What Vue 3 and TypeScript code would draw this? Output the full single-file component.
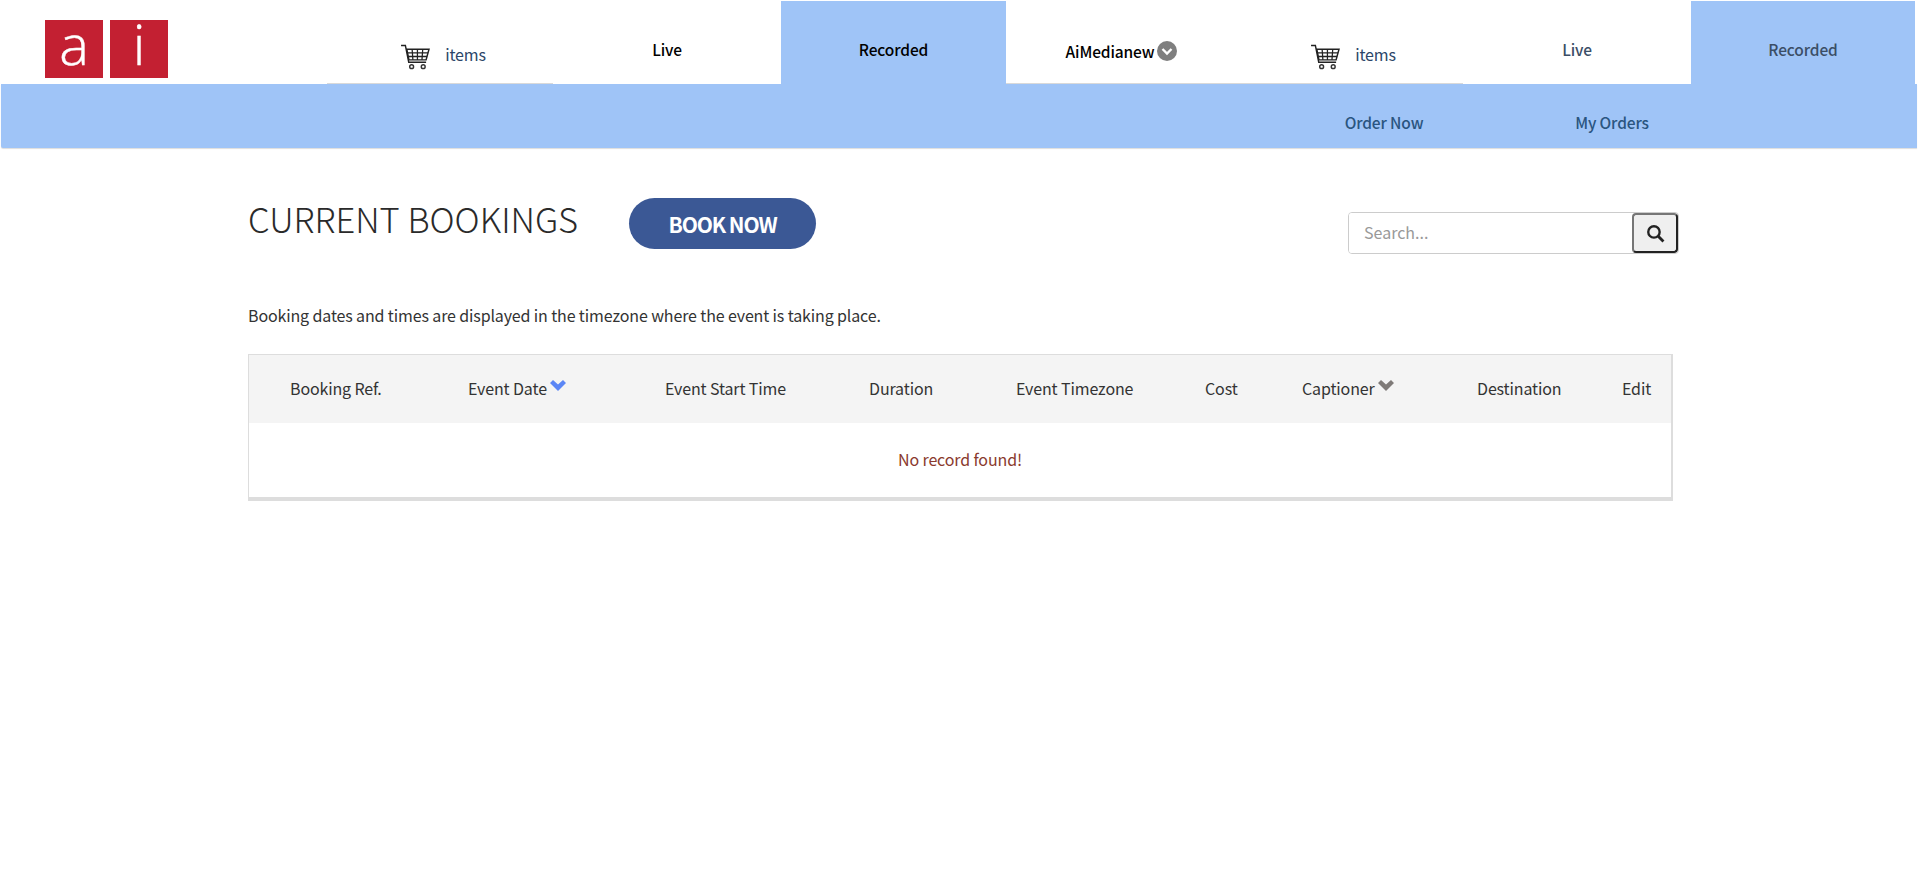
<template>
  <div class="page">
    <header class="top">
      <div class="logo">
        <span class="logo-box">a</span>
        <span class="logo-box">i</span>
      </div>
      <nav class="tabs">
        <a
          v-for="tab in tabs"
          :key="tab.id"
          class="tab"
          :class="[tab.kind, { active: tab.active, faded: tab.faded }]"
          :style="{ width: tab.width + 'px' }"
        >
          <svg v-if="tab.kind == 'cart'" class="cart-icon" viewBox="0 0 32 28" aria-hidden="true">
            <path d="M1 2.500h4.500l3.500 17.500h18" fill="none" stroke="#222" stroke-width="1.500" />
            <path d="M7 6.500h23l-3 11H9.200z" fill="none" stroke="#222" stroke-width="1.500" />
            <path
              d="M7.500 10.200h21.500M8.300 14h19.700M12.500 6.500l.8 11M18 6.500v11M23.500 6.500l-.8 11"
              fill="none"
              stroke="#222"
              stroke-width="1.300"
            />
            <circle cx="12" cy="24.500" r="2" fill="none" stroke="#333" stroke-width="1.500" />
            <circle cx="24" cy="24.500" r="2" fill="none" stroke="#333" stroke-width="1.500" />
          </svg>
          <span>{{ tab.label }}</span>
          <span v-if="tab.kind == 'user'" class="user-arrow">
            <svg viewBox="0 0 20 20" aria-hidden="true">
              <path d="M5.500 8l4.500 4.500L14.500 8" fill="none" stroke="#fff" stroke-width="2.400" />
            </svg>
          </span>
        </a>
      </nav>
    </header>

    <div class="subbar">
      <a class="sublink">Order Now</a>
      <a class="sublink">My Orders</a>
    </div>

    <main class="content">
      <div class="title-row">
        <h1>CURRENT BOOKINGS</h1>
        <button class="book" type="button">BOOK NOW</button>
        <div class="search">
          <input type="text" placeholder="Search..." />
          <button type="button" aria-label="Search">
            <svg viewBox="0 0 16 16" aria-hidden="true">
              <circle cx="6.700" cy="6.700" r="4.800" fill="none" stroke="#222" stroke-width="2" />
              <path d="M10.300 10.300l4.400 4.400" stroke="#222" stroke-width="2.400" />
            </svg>
          </button>
        </div>
      </div>

      <p class="note">Booking dates and times are displayed in the timezone where the event is taking place.</p>

      <section class="table">
        <div class="head">
          <div v-for="col in columns" :key="col.label" class="cell">
            {{ col.label }}
            <svg v-if="col.sort" class="chev" viewBox="0 0 16 11" :style="{ fill: col.sort }" aria-hidden="true">
              <path d="M0 3L3 0 8 4.500 13 0 16 3 8 11z" />
            </svg>
          </div>
        </div>
        <div class="empty">No record found!</div>
      </section>
    </main>
  </div>
</template>

<script setup lang="ts">
type Tab = {
  id: number;
  label: string;
  kind: string;
  width: number;
  active?: boolean;
  faded?: boolean;
};

const tabs: Tab[] = [
  { id: 1, label: "items", kind: "cart", width: 226 },
  { id: 2, label: "Live", kind: "plain", width: 228 },
  { id: 3, label: "Recorded", kind: "plain", width: 225, active: true },
  { id: 4, label: "AiMedianew", kind: "user", width: 231 },
  { id: 5, label: "items", kind: "cart", width: 226 },
  { id: 6, label: "Live", kind: "plain", width: 228, faded: true },
  { id: 7, label: "Recorded", kind: "plain", width: 224, active: true, faded: true },
];

const columns: { label: string; sort?: string }[] = [
  { label: "Booking Ref." },
  { label: "Event Date", sort: "#5b86f5" },
  { label: "Event Start Time" },
  { label: "Duration" },
  { label: "Event Timezone" },
  { label: "Cost" },
  { label: "Captioner", sort: "#7f7a78" },
  { label: "Destination" },
  { label: "Edit" },
];
</script>

<style scoped>
.page {
  height: 887px;
  overflow: hidden;
  background: #fff;
  color: #333;
  font-family: "Noto Sans CJK SC", "Open Sans", sans-serif;
  font-size: 16px;
  letter-spacing: -0.13px;
}
.top {
  display: flex;
  height: 84px;
}
.logo {
  display: flex;
  gap: 7px;
  width: 282px;
  margin-left: 45px;
  padding-top: 20px;
}
.logo-box {
  width: 58px;
  height: 58px;
  background: #c32032;
  color: #fff;
  font-family: "Open Sans", sans-serif;
  font-weight: 300;
  font-size: 56px;
  line-height: 47px;
  text-align: center;
  -webkit-text-stroke: 0.4px #fff;
}
.tabs {
  display: flex;
}
.tab {
  display: flex;
  align-items: center;
  justify-content: center;
  height: 83px;
  margin-top: 1px;
  box-sizing: border-box;
  color: #000;
  font-size: 15.500px;
  font-weight: 500;
}
.tab.plain {
  padding-top: 12px;
}
.tab.active {
  background: #9fc4f7;
}
.tab.faded {
  color: #3b4e66;
}
.tab.cart {
  gap: 14px;
  padding-top: 24px;
  padding-left: 6px;
  border-bottom: 1px solid #d9d9d9;
  color: #2b4668;
  font-size: 16px;
  font-weight: 400;
}
.tab.user {
  gap: 3px;
  padding-top: 17px;
  border-bottom: 1px solid #d9d9d9;
}
.cart-icon {
  width: 31px;
  height: 27px;
  margin-top: 4px;
}
.user-arrow {
  display: flex;
  width: 20px;
  height: 20px;
  border-radius: 50%;
  background: #7f7f7f;
}
.subbar {
  display: flex;
  justify-content: flex-end;
  height: 64px;
  margin: 0 3px 0 1px;
  padding-right: 191px;
  background: #9fc4f7;
  box-shadow: 0 1px 1px #ddd;
  border-bottom-left-radius: 2px;
}
.sublink {
  width: 228px;
  padding-top: 25px;
  color: #2a5580;
  font-size: 15.500px;
  font-weight: 500;
  line-height: 26px;
  text-align: center;
}
.content {
  padding: 0 241px 0 248px;
}
.title-row {
  display: flex;
  align-items: flex-start;
  padding-top: 50px;
  height: 104px;
}
h1 {
  margin: 0;
  width: 381px;
  color: #2a2a2a;
  font-size: 34.500px;
  font-weight: 300;
  letter-spacing: 0;
  line-height: 40px;
}
.book {
  width: 187px;
  height: 51px;
  padding: 0;
  border: 0;
  border-radius: 26px;
  background: #3b5895;
  color: #fff;
  font-family: inherit;
  font-size: 21px;
  font-weight: 700;
  letter-spacing: -1.100px;
}
.search {
  display: flex;
  width: 331px;
  height: 42px;
  margin: 14px 0 0 auto;
  box-sizing: border-box;
  border: 1px solid #ccc;
  border-radius: 4px;
  overflow: hidden;
}
.search input {
  flex: 1;
  min-width: 0;
  padding: 0 15px 2px;
  border: 0;
  outline: 0;
  color: #333;
  font-family: inherit;
  font-size: 16px;
}
.search input::placeholder {
  color: #999;
}
.search button {
  display: flex;
  align-items: center;
  justify-content: center;
  width: 46px;
  padding: 0;
  background: #efefef;
  border: 2px solid;
  border-color: #767676 #222 #222 #767676;
  border-radius: 4px;
}
.search svg {
  width: 19px;
  height: 19px;
}
.note {
  margin: 0 0 26px;
  color: #333;
  line-height: 26px;
}
.table {
  box-sizing: border-box;
  width: 1425px;
  height: 147px;
  border: solid #ddd;
  border-width: 1px 2px 4px 1px;
}
.head {
  display: grid;
  grid-template-columns: 178px 197px 204px 147px 189px 97px 175px 145px 1fr;
  height: 68px;
  padding-left: 41px;
  background: #f4f4f4;
  line-height: 66px;
}
.cell {
  white-space: nowrap;
}
.chev {
  width: 16px;
  height: 11px;
  vertical-align: 4px;
}
.empty {
  color: #8a3a2e;
  line-height: 72px;
  text-align: center;
}
</style>
